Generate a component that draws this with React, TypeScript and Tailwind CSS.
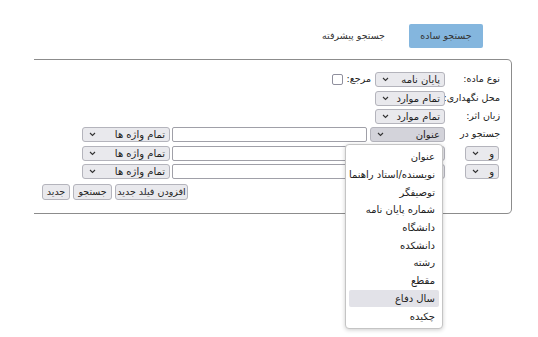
import React from "react";

function Chevron() {
  return (
    <svg width="7" height="5" viewBox="0 0 7 5" className="shrink-0">
      <path d="M1 1l2.5 2.5L6 1" fill="none" stroke="#333" strokeWidth="1.1" />
    </svg>
  );
}

function FakeSelect({ label, className = "" }: { label: string; className?: string }) {
  return (
    <div
      className={`flex h-[15px] shrink-0 items-center justify-between rounded-[3px] border border-[#b4b4bc] pl-[6px] pr-[4px] text-[10px] ${className}`}
    >
      <span className="whitespace-nowrap leading-none">{label}</span>
      <Chevron />
    </div>
  );
}

function Btn({ children, className = "" }: { children: React.ReactNode; className?: string }) {
  return (
    <div
      className={`flex h-[16px] items-center justify-center whitespace-nowrap rounded-[3px] border border-[#b4b4bc] bg-[#e9e9ed] text-[9.5px] leading-none ${className}`}
    >
      {children}
    </div>
  );
}

const options = [
  "عنوان",
  "نویسنده/استاد راهنما",
  "توصیفگر",
  "شماره پایان نامه",
  "دانشگاه",
  "دانشکده",
  "رشته",
  "مقطع",
  "سال دفاع",
  "چکیده",
];

export default function App() {
  return (
    <div
      dir="rtl"
      className="min-h-[337px] w-[538px] bg-white font-['DejaVu_Sans',Tahoma,sans-serif] text-[9.5px] text-[#222]"
    >
      {/* tabs */}
      <div className="flex h-[59px] items-start gap-[24px] pr-[55px] pt-[24px]">
        <div className="flex h-[24px] w-[74px] items-center justify-center rounded-[2px] bg-[#84b6de] text-[#333]">
          جستجو ساده
        </div>
        <div className="flex h-[24px] items-center text-[#333]">جستجو پیشرفته</div>
      </div>

      {/* form panel */}
      <div className="ml-[34px] mr-[26px] h-[155px] rounded-r-[5px] border-y border-r border-[#8c8c8c] pl-[8px] pr-[11px] pt-[12px]">
        <div className="flex h-[15px] items-center">
          <div className="w-[55px] shrink-0">نوع ماده:</div>
          <FakeSelect label="پایان نامه" className="w-[70px] bg-[#e9e9ed]" />
          <span className="mr-[4px]">مرجع:</span>
          <div className="mr-[4px] h-[11px] w-[11px] rounded-[2px] border border-[#8f8f9d] bg-white" />
        </div>

        <div className="mt-[4px] flex h-[15px] items-center">
          <div className="w-[55px] shrink-0 whitespace-nowrap">محل نگهداری:</div>
          <FakeSelect label="تمام موارد" className="w-[70px] bg-[#e9e9ed]" />
        </div>

        <div className="mt-[3px] flex h-[15px] items-center">
          <div className="w-[55px] shrink-0">زبان اثر:</div>
          <FakeSelect label="تمام موارد" className="w-[70px] bg-[#e9e9ed]" />
        </div>

        <div className="mt-[3px] flex h-[15px] items-center">
          <div className="w-[55px] shrink-0">جستجو در</div>
          <div className="relative">
            <FakeSelect label="عنوان" className="w-[75px] bg-[#d3d3da]" />
            <div className="absolute right-[2px] top-[17px] z-10 w-[98px] rounded-[4px] border border-[#c4c4c4] bg-white py-[3px] text-[10px] shadow-[0_1px_4px_rgba(0,0,0,0.2)]">
              {options.map((o) => (
                <div
                  key={o}
                  className={`mx-[3px] flex h-[17.7px] items-center whitespace-nowrap rounded-[2px] pr-[4px] ${
                    o === "سال دفاع" ? "bg-[#e2e2e8]" : ""
                  }`}
                >
                  {o}
                </div>
              ))}
            </div>
          </div>
          <div className="mr-[3px] h-[15px] w-[195px] rounded-[2px] border border-[#a0a0a8] bg-white" />
          <FakeSelect label="تمام واژه ها" className="mr-[2px] w-[88px] bg-[#e9e9ed]" />
        </div>

        {[0, 1].map((i) => (
          <div key={i} className={`${i === 0 ? "mt-[4px]" : "mt-[3px]"} flex h-[15px] items-center`}>
            <div className="flex w-[55px] shrink-0 justify-start pr-[1px]">
              <FakeSelect label="و" className="w-[34px] bg-[#e9e9ed]" />
            </div>
            {/* field select, covered by the open list */}
            <FakeSelect label="" className="w-[75px] bg-[#e9e9ed]" />
            <div className="mr-[3px] h-[15px] w-[195px] rounded-[2px] border border-[#a0a0a8] bg-white" />
            <FakeSelect label="تمام واژه ها" className="mr-[2px] w-[88px] bg-[#e9e9ed]" />
          </div>
        ))}

        <div className="mt-[5px] flex justify-end gap-[3px]">
          <Btn className="w-[73px]">افزودن فیلد جدید</Btn>
          <Btn className="w-[39px]">جستجو</Btn>
          <Btn className="w-[28px]">جدید</Btn>
        </div>
      </div>
    </div>
  );
}
